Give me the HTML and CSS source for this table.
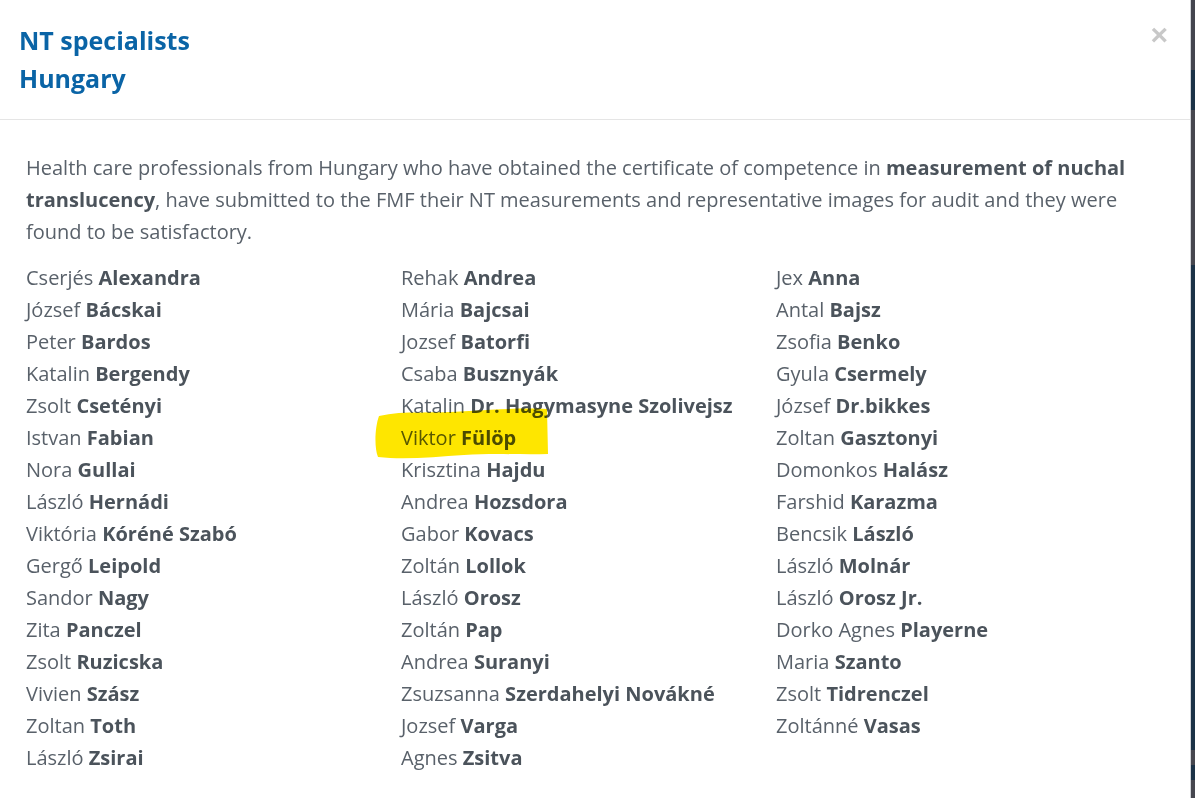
FILE: index.html
```html
<!DOCTYPE html>
<html lang="en">
<head>
<meta charset="utf-8">
<title>NT specialists Hungary</title>
<link rel="stylesheet" href="styles.css">
</head>
<body>
<div class="page">
  <div class="modal">
    <div class="modal-header">
      <h4 class="modal-title">NT specialists<br>Hungary</h4>
      <button class="close" type="button" aria-label="Close">&times;</button>
    </div>
    <div class="modal-body">
      <p class="intro">Health care professionals from Hungary who have obtained the certificate of competence in <b>measurement of nuchal translucency</b>, have submitted to the FMF their NT measurements and representative images for audit and they were found to be satisfactory.</p>
      <div class="names">
        <ul class="col">
          <li>Cserjés <b>Alexandra</b></li>
          <li>József <b>Bácskai</b></li>
          <li>Peter <b>Bardos</b></li>
          <li>Katalin <b>Bergendy</b></li>
          <li>Zsolt <b>Csetényi</b></li>
          <li>Istvan <b>Fabian</b></li>
          <li>Nora <b>Gullai</b></li>
          <li>László <b>Hernádi</b></li>
          <li>Viktória <b>Kóréné Szabó</b></li>
          <li>Gergő <b>Leipold</b></li>
          <li>Sandor <b>Nagy</b></li>
          <li>Zita <b>Panczel</b></li>
          <li>Zsolt <b>Ruzicska</b></li>
          <li>Vivien <b>Szász</b></li>
          <li>Zoltan <b>Toth</b></li>
          <li>László <b>Zsirai</b></li>
        </ul>
        <ul class="col">
          <li>Rehak <b>Andrea</b></li>
          <li>Mária <b>Bajcsai</b></li>
          <li>Jozsef <b>Batorfi</b></li>
          <li>Csaba <b>Busznyák</b></li>
          <li>Katalin <b>Dr. Hagymasyne Szolivejsz</b></li>
          <li class="marked">Viktor <b>Fülöp</b><svg class="highlight" viewBox="0 0 176 54" width="176" height="54" aria-hidden="true"><path d="M5 9 C 30 3, 60 7, 95 4 C 125 2, 150 1, 173 2 L 174 47 C 150 48, 120 46, 90 48 C 60 50, 30 53, 4 50 C 0 40, 1 20, 5 9 Z" fill="#fee600"/></svg></li>
          <li>Krisztina <b>Hajdu</b></li>
          <li>Andrea <b>Hozsdora</b></li>
          <li>Gabor <b>Kovacs</b></li>
          <li>Zoltán <b>Lollok</b></li>
          <li>László <b>Orosz</b></li>
          <li>Zoltán <b>Pap</b></li>
          <li>Andrea <b>Suranyi</b></li>
          <li>Zsuzsanna <b>Szerdahelyi Novákné</b></li>
          <li>Jozsef <b>Varga</b></li>
          <li>Agnes <b>Zsitva</b></li>
        </ul>
        <ul class="col">
          <li>Jex <b>Anna</b></li>
          <li>Antal <b>Bajsz</b></li>
          <li>Zsofia <b>Benko</b></li>
          <li>Gyula <b>Csermely</b></li>
          <li>József <b>Dr.bikkes</b></li>
          <li>Zoltan <b>Gasztonyi</b></li>
          <li>Domonkos <b>Halász</b></li>
          <li>Farshid <b>Karazma</b></li>
          <li>Bencsik <b>László</b></li>
          <li>László <b>Molnár</b></li>
          <li>László <b>Orosz Jr.</b></li>
          <li>Dorko Agnes <b>Playerne</b></li>
          <li>Maria <b>Szanto</b></li>
          <li>Zsolt <b>Tidrenczel</b></li>
          <li>Zoltánné <b>Vasas</b></li>
        </ul>
      </div>
    </div>
  </div>
  <div class="backdrop-edge"></div>
</div>
</body>
</html>
```

FILE: styles.css
```css
* { box-sizing: border-box; }

html, body {
  margin: 0;
  padding: 0;
  height: 100%;
}

body {
  font-family: "Open Sans", "Noto Sans", "Liberation Sans", sans-serif;
  background: #ffffff;
  overflow: hidden;
}

.page {
  display: flex;
  width: 1195px;
  height: 798px;
}

.modal {
  width: 1191px;
  height: 798px;
  background: #ffffff;
  border-right: 1px solid #d0d3d8;
}

.backdrop-edge {
  flex: 1;
  background: linear-gradient(to bottom,
    #44454f 0, #44454f 70px,
    #1b3247 70px, #1b3247 110px,
    #46474f 110px, #46474f 265px,
    #1b3247 265px, #1b3247 750px,
    #46474f 750px, #46474f 765px,
    #1b3247 765px, #1b3247 780px,
    #46474f 780px);
}

.modal-header {
  position: relative;
  height: 120px;
  padding: 21px 19px 0;
  border-bottom: 1px solid #e5e5e5;
}

.modal-title {
  margin: 0;
  font-size: 25px;
  line-height: 38px;
  font-weight: 700;
  color: #0a64a6;
}

.close {
  position: absolute;
  top: 18px;
  right: 22px;
  padding: 0;
  border: 0;
  background: transparent;
  font-family: "Liberation Sans", sans-serif;
  font-size: 30px;
  line-height: 34px;
  font-weight: 700;
  color: #c8c8c8;
  cursor: pointer;
}

.modal-body {
  padding: 32px 26px 0;
  color: #59616a;
  font-size: 20px;
  line-height: 32px;
}

.intro {
  margin: 0 0 14px;
  max-width: 1110px;
}

.intro b,
.names b {
  font-weight: 700;
  color: #4b535b;
}

.names {
  display: grid;
  grid-template-columns: 375px 375px 375px;
}

.col {
  list-style: none;
  margin: 0;
  padding: 0;
}

.col li {
  height: 32px;
  white-space: nowrap;
}

.marked {
  position: relative;
}

.highlight {
  position: absolute;
  left: -27px;
  top: -15px;
  mix-blend-mode: multiply;
  pointer-events: none;
}
```
